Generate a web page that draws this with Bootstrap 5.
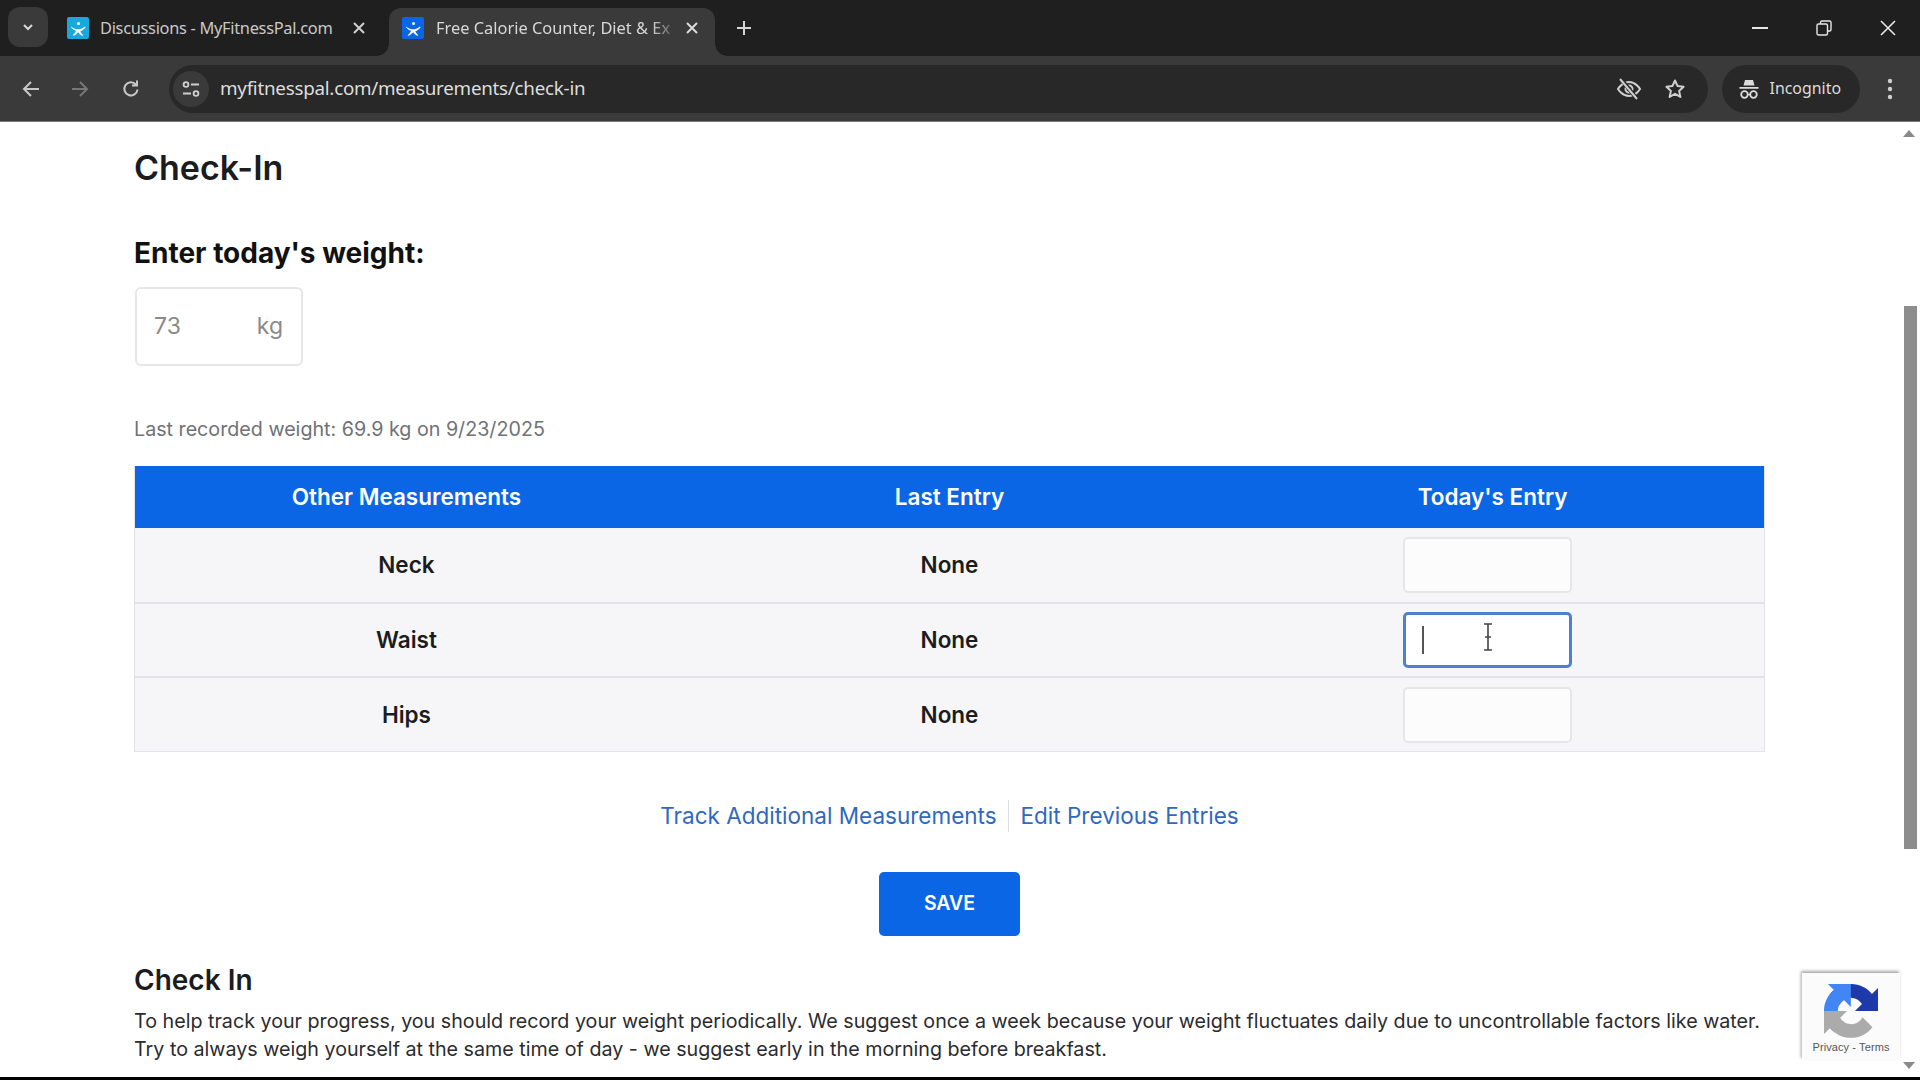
<!doctype html>
<html lang="en">
<head>
<meta charset="utf-8">
<title>Check-In</title>
<link href="https://cdn.jsdelivr.net/npm/bootstrap@5.3.0/dist/css/bootstrap.min.css" rel="stylesheet">
<style>
html,body{height:100%;overflow:hidden;background:#000}
body{font-family:"Inter","Liberation Sans",sans-serif;color:#1b1c1e}
.shell{height:1077px;background:#fff}
.tabstrip{height:56px;background:#1f1f1f;font-family:"Noto Sans","Liberation Sans",sans-serif;padding:8px 0 0 8px}
.tabsearch{width:40px;height:40px;border-radius:12px;background:#3a3a3a;margin-top:-1px}
.browser-tab{height:48px;width:328px;margin-left:3px;padding:0 21px 8px 8px;font-size:16.4px;letter-spacing:-.3px;color:#c9c9c9;flex:none}
.browser-tab.is-active{position:relative;background:#3a3a3a;border-radius:12px 12px 0 0;color:#d8d8d8;width:326px;padding-left:13px;padding-right:16px;margin-left:2px;letter-spacing:0}
.browser-tab.is-active::before,.browser-tab.is-active::after{content:"";position:absolute;bottom:0;width:12px;height:12px}
.browser-tab.is-active::before{left:-12px;background:radial-gradient(circle at 0 0,transparent 11.5px,#3a3a3a 12px)}
.browser-tab.is-active::after{right:-12px;background:radial-gradient(circle at 100% 0,transparent 11.5px,#3a3a3a 12px)}
.tab-title{white-space:nowrap;flex:1;margin-left:11px}
.is-active .tab-title{margin-left:12px;-webkit-mask-image:linear-gradient(90deg,#000 86%,transparent 98%);mask-image:linear-gradient(90deg,#000 86%,transparent 98%)}
.fav{width:22px;height:22px;flex:none;border-radius:2px}
.newtab{width:40px;height:40px;margin-left:9px;color:#d6d6d6}
.winctl{margin-left:auto;gap:0;margin-top:-8px}
.winbtn{width:64px;height:56px;color:#e6e6e6}
.toolbar{height:66px;background:#3a3a3a;border-bottom:1px solid #777;padding:0 14px 0 7px;font-family:"Noto Sans","Liberation Sans",sans-serif}
.navbtn{width:50px;height:40px;color:#c8c8c8;margin-left:-1px}
.navbtn.dim{color:#777}
.navbtn.reload{margin-left:1px}
.omni{height:48px;background:#282828;border-radius:24px;flex:1;margin:0 14px 0 13px;padding:0 18px 0 4px;color:#dedede;font-size:18.8px;letter-spacing:-.25px;min-width:0}
.omni-tune{width:36px;height:36px;border-radius:50%;background:#3a3a3a;margin-right:11px;color:#cfcfcf}
.omni-ic{width:30px;height:30px;color:#cfcfcf;margin-left:16px}
.incog{height:48px;background:#282828;border-radius:24px;padding:0 19px 0 16px;color:#dcdcdc;font-size:15.9px;gap:10px}
.kebab{width:44px;color:#cfcfcf;margin-left:8px;margin-right:-6px}
.viewport{flex:1;min-height:0;position:relative}
.pagebody{flex:1;min-width:0;padding:0 138px 0 134px;overflow:hidden}
.scrollcol{width:17px;background:#fff;flex:none;padding:8px 0 0}
.scroll-up,.scroll-down{width:0;height:0;border-left:6px solid transparent;border-right:6px solid transparent;margin:0}
.scroll-up{border-bottom:7px solid #8a8a8a}
.scroll-down{border-top:7px solid #8a8a8a;margin-bottom:8px}
.thumb{width:13px;background:#8d8d8d;margin:169px 0 auto 1px;height:543px}
h1.pg-title{font-size:34px;font-weight:600;line-height:40px;margin:26px 0 0}
h2.pg-sub{font-size:28px;font-weight:700;line-height:36px;margin:47px 0 0;color:#111}
.weightbox{width:168px;height:79px;margin:16px 0 0 1px;border:2px solid #e6e6e6;border-radius:6px;padding:0 18px 0 17px;font-size:23px;color:#8a8a8a;background:#fff}
.lastrec{font-size:19.7px;color:#6f7276;margin:50px 0 0;line-height:26px}
.mtable{width:100%;margin:24px 0 0;table-layout:fixed;border:1px solid #e4e4e8;border-top:0}
.mtable th{background:#0a66e4;color:#fff;font-size:22.5px;font-weight:600;height:62px;padding:0;text-align:center;border:0;vertical-align:middle;box-shadow:none}
.mtable td{background:#f6f6f8;font-size:22.5px;font-weight:600;height:74.5px;padding:0;text-align:center;vertical-align:middle;border-bottom:2px solid #e2e2e6;color:#1b1c1e;box-shadow:none}
.mtable tr:last-child td{border-bottom:0}
.entrywrap{display:inline-block;position:relative;margin-right:10px;vertical-align:middle}
.entry{display:block;width:169px;height:56px;border:2px solid #e6e6e8;border-radius:5px;background:#fcfcfd;box-shadow:none;padding:0 18px}
.entry.is-focus{border:3px solid #4e7fd0;background:#fff}
.caretbar{position:absolute;left:19px;top:14px;width:2px;height:28px;background:#555}
.ibeam{position:absolute;left:79px;top:11px;width:12px;height:28px;color:#444}
.linkrow{margin-top:46px;font-size:22.5px;line-height:36px}
.linkrow a{color:#2f68c0;text-decoration:none}
.linkrow .sep{width:1px;height:32px;background:#ddd;margin:0 12px 0 11px}
.savebtn{width:141px;height:64px;background:#0a66e4;border:0;border-radius:5px;color:#fff;font-weight:600;font-size:19.5px;margin-top:38px;--bs-btn-hover-bg:#0a66e4}
h3.pg-h3{font-size:28px;font-weight:600;line-height:34px;margin:26.5px 0 0}
.helptxt{font-size:19.7px;line-height:28px;color:#2b2c2e;margin:10px 0 0;white-space:nowrap}
.recap{position:absolute;left:1802px;top:851px;width:98px;height:87px;background:#fbfbfb;box-shadow:-1px -2px 3px rgba(0,0,0,.35);padding-top:11px}
.recap svg{display:block;margin:0 auto}
.recap-terms{font-size:11px;color:#555;font-family:"Liberation Sans",sans-serif;margin-top:1px;letter-spacing:.1px}
</style>
</head>
<body>
<div class="shell d-flex flex-column">
  <div class="tabstrip d-flex align-items-start flex-none">
    <div class="tabsearch d-flex align-items-center justify-content-center me-2">
      <svg width="14" height="14" viewBox="0 0 14 14" fill="none" stroke="#d8d8d8" stroke-width="2"><path d="M3 5l4 4 4-4"/></svg>
    </div>
    <div class="browser-tab d-flex align-items-center">
      <svg class="fav" viewBox="0 0 22 22"><rect width="22" height="22" fill="#19a8dc"/><circle cx="11.5" cy="6.5" r="1.5" fill="#fff"/><path d="M4 9.5c3 2.5 5 2.8 7 2.8s4-.3 7-2.8l.6.8c-2 2.5-4 3.6-5.4 4.2.9 1.6 2 2.8 3 3.7l-.6.6c-2-.8-3.5-2.2-4.4-3.6-1.2 1.6-2.8 2.8-5 3.6l-.5-.6c1.4-1.2 2.6-2.6 3.4-4.2-1.9-.8-3.7-2-5-3.7z" fill="#fff"/></svg>
      <span class="tab-title">Discussions - MyFitnessPal.com</span>
      <svg width="14" height="14" viewBox="0 0 14 14" stroke="#cfcfcf" stroke-width="2"><path d="M2 2l10 10M12 2L2 12"/></svg>
    </div>
    <div class="browser-tab is-active d-flex align-items-center">
      <svg class="fav" viewBox="0 0 22 22"><rect width="22" height="22" fill="#0a66e4"/><circle cx="11.5" cy="6.5" r="1.5" fill="#fff"/><path d="M4 9.5c3 2.5 5 2.8 7 2.8s4-.3 7-2.8l.6.8c-2 2.5-4 3.6-5.4 4.2.9 1.6 2 2.8 3 3.7l-.6.6c-2-.8-3.5-2.2-4.4-3.6-1.2 1.6-2.8 2.8-5 3.6l-.5-.6c1.4-1.2 2.6-2.6 3.4-4.2-1.9-.8-3.7-2-5-3.7z" fill="#fff"/></svg>
      <span class="tab-title">Free Calorie Counter, Diet &amp; Ex</span>
      <svg width="14" height="14" viewBox="0 0 14 14" stroke="#dcdcdc" stroke-width="2"><path d="M2 2l10 10M12 2L2 12"/></svg>
    </div>
    <div class="newtab d-flex align-items-center justify-content-center">
      <svg width="18" height="18" viewBox="0 0 18 18" stroke="currentColor" stroke-width="2"><path d="M9 2v14M2 9h14"/></svg>
    </div>
    <div class="winctl d-flex">
      <div class="winbtn d-flex align-items-center justify-content-center"><svg width="16" height="2"><rect width="16" height="2" fill="currentColor"/></svg></div>
      <div class="winbtn d-flex align-items-center justify-content-center"><svg width="16" height="16" viewBox="0 0 16 16" fill="none" stroke="currentColor" stroke-width="1.4"><rect x="1" y="4" width="10.5" height="11" rx="1.5"/><path d="M4.5 4V2.5A1.5 1.5 0 0 1 6 1h7.5A1.5 1.5 0 0 1 15 2.5v7a1.5 1.5 0 0 1-1.5 1.5H11.5"/></svg></div>
      <div class="winbtn d-flex align-items-center justify-content-center"><svg width="16" height="16" viewBox="0 0 16 16" stroke="currentColor" stroke-width="1.6"><path d="M1 1l14 14M15 1L1 15"/></svg></div>
    </div>
  </div>
  <div class="toolbar d-flex align-items-center">
    <div class="navbtn d-flex align-items-center justify-content-center"><svg width="20" height="20" viewBox="0 0 20 20" fill="none" stroke="currentColor" stroke-width="2"><path d="M18 10H3M10 3l-7 7 7 7"/></svg></div>
    <div class="navbtn dim d-flex align-items-center justify-content-center"><svg width="20" height="20" viewBox="0 0 20 20" fill="none" stroke="currentColor" stroke-width="2"><path d="M2 10h15M10 3l7 7-7 7"/></svg></div>
    <div class="navbtn reload d-flex align-items-center justify-content-center"><svg width="20" height="20" viewBox="0 0 20 20" fill="none" stroke="currentColor" stroke-width="2"><path d="M16.5 10.5a6.6 6.6 0 1 1-1.6-5M16 1.5v5h-5"/></svg></div>
    <div class="omni d-flex align-items-center">
      <div class="omni-tune d-flex align-items-center justify-content-center"><svg width="20" height="20" viewBox="0 0 20 20" fill="none" stroke="currentColor" stroke-width="1.8"><circle cx="5" cy="5.5" r="2.4"/><path d="M10 5.5h8M2 14.5h8"/><circle cx="15" cy="14.5" r="2.4"/></svg></div>
      <span>myfitnesspal.com/measurements/check-in</span>
      <span class="ms-auto d-flex align-items-center">
        <span class="omni-ic d-flex align-items-center justify-content-center"><svg width="26" height="22" viewBox="0 0 26 22" fill="none" stroke="currentColor" stroke-width="2"><path d="M2 11s4-7 11-7 11 7 11 7-4 7-11 7-11-7-11-7z"/><circle cx="13" cy="11" r="3.5"/><path d="M5 1l16 20" stroke="#282828" stroke-width="4"/><path d="M4 1l17 20"/></svg></span>
        <span class="omni-ic d-flex align-items-center justify-content-center"><svg width="22" height="22" viewBox="0 0 22 22" fill="none" stroke="currentColor" stroke-width="2" stroke-linejoin="round"><path d="M11 2.5l2.6 5.6 6 .7-4.5 4.1 1.3 6-5.4-3.1-5.4 3.1 1.3-6-4.5-4.1 6-.7z"/></svg></span>
      </span>
    </div>
    <div class="incog d-flex align-items-center">
      <svg width="22" height="22" viewBox="0 0 22 22" fill="currentColor"><path d="M7 2h8l1.5 5.5H5.5zM1.5 9h19v1.8h-19z"/><circle cx="6.5" cy="16.5" r="3.3" fill="none" stroke="currentColor" stroke-width="1.8"/><circle cx="15.5" cy="16.5" r="3.3" fill="none" stroke="currentColor" stroke-width="1.8"/><path d="M9.5 15.8h3v1.4h-3z"/></svg>
      <span>Incognito</span>
    </div>
    <div class="kebab d-flex align-items-center justify-content-center"><svg width="6" height="22" viewBox="0 0 6 22" fill="currentColor"><circle cx="3" cy="3" r="2.2"/><circle cx="3" cy="11" r="2.2"/><circle cx="3" cy="19" r="2.2"/></svg></div>
  </div>
  <div class="viewport d-flex">
    <main class="pagebody">
      <h1 class="pg-title">Check-In</h1>
      <h2 class="pg-sub">Enter today's weight:</h2>
      <div class="weightbox d-flex align-items-center justify-content-between"><span>73</span><span>kg</span></div>
      <p class="lastrec">Last recorded weight: 69.9 kg on 9/23/2025</p>
      <table class="table mtable mb-0">
        <thead><tr><th>Other Measurements</th><th>Last Entry</th><th>Today's Entry</th></tr></thead>
        <tbody>
          <tr><td>Neck</td><td>None</td><td><span class="entrywrap"><input class="form-control entry" aria-label="Neck"></span></td></tr>
          <tr><td>Waist</td><td>None</td><td><span class="entrywrap"><input class="form-control entry is-focus" aria-label="Waist"><span class="caretbar"></span><svg class="ibeam" viewBox="0 0 12 28" fill="none" stroke="currentColor" stroke-width="1.6"><path d="M2 1h8M6 1v26M2 27h8M3 14h6"/></svg></span></td></tr>
          <tr><td>Hips</td><td>None</td><td><span class="entrywrap"><input class="form-control entry" aria-label="Hips"></span></td></tr>
        </tbody>
      </table>
      <div class="linkrow d-flex justify-content-center align-items-center"><a href="#">Track Additional Measurements</a><span class="sep"></span><a href="#">Edit Previous Entries</a></div>
      <div class="text-center"><button class="btn btn-primary savebtn" type="button">SAVE</button></div>
      <h3 class="pg-h3">Check In</h3>
      <p class="helptxt">To help track your progress, you should record your weight periodically. We suggest once a week because your weight fluctuates daily due to uncontrollable factors like water.<br>Try to always weigh yourself at the same time of day - we suggest early in the morning before breakfast.</p>
    </main>
    <div class="scrollcol d-flex flex-column">
      <div class="scroll-up"></div>
      <div class="thumb"></div>
      <div class="scroll-down"></div>
    </div>
    <div class="recap text-center">
      <svg width="54" height="54" viewBox="0 0 64 64"><path d="M64 31.955l-.033-1.37V4.687l-7.16 7.16C50.948 4.674 42.033.093 32.05.093c-10.4 0-19.622 4.96-25.458 12.64l11.736 11.86a15.55 15.55 0 0 1 4.754-5.334c2.05-1.6 4.952-2.906 8.968-2.906.485 0 .86.057 1.135.163 4.976.393 9.288 3.14 11.828 7.124l-8.307 8.307L64 31.953" fill="#1c3aa9"/><path d="M31.862 0l-1.37.033H4.594l7.16 7.16C4.58 13.052 0 21.967 0 31.95c0 10.4 4.96 19.622 12.64 25.458L24.5 45.67a15.55 15.55 0 0 1-5.334-4.754c-1.6-2.05-2.906-4.952-2.906-8.968 0-.485.057-.86.163-1.135.393-4.976 3.14-9.288 7.124-11.828l8.307 8.307L31.86 0" fill="#4285f4"/><path d="M.001 31.955l.033 1.37v25.898l7.16-7.16c5.86 7.173 14.774 11.754 24.758 11.754 10.4 0 19.622-4.96 25.458-12.64l-11.736-11.86a15.55 15.55 0 0 1-4.754 5.334c-2.05 1.6-4.952 2.906-8.968 2.906-.485 0-.86-.057-1.135-.163-4.976-.393-9.288-3.14-11.828-7.124l8.307-8.307L0 31.953" fill="#ababab"/></svg>
      <div class="recap-terms">Privacy - Terms</div>
    </div>
  </div>
</div>
<script src="https://cdn.jsdelivr.net/npm/bootstrap@5.3.0/dist/js/bootstrap.bundle.min.js"></script>
</body>
</html>
